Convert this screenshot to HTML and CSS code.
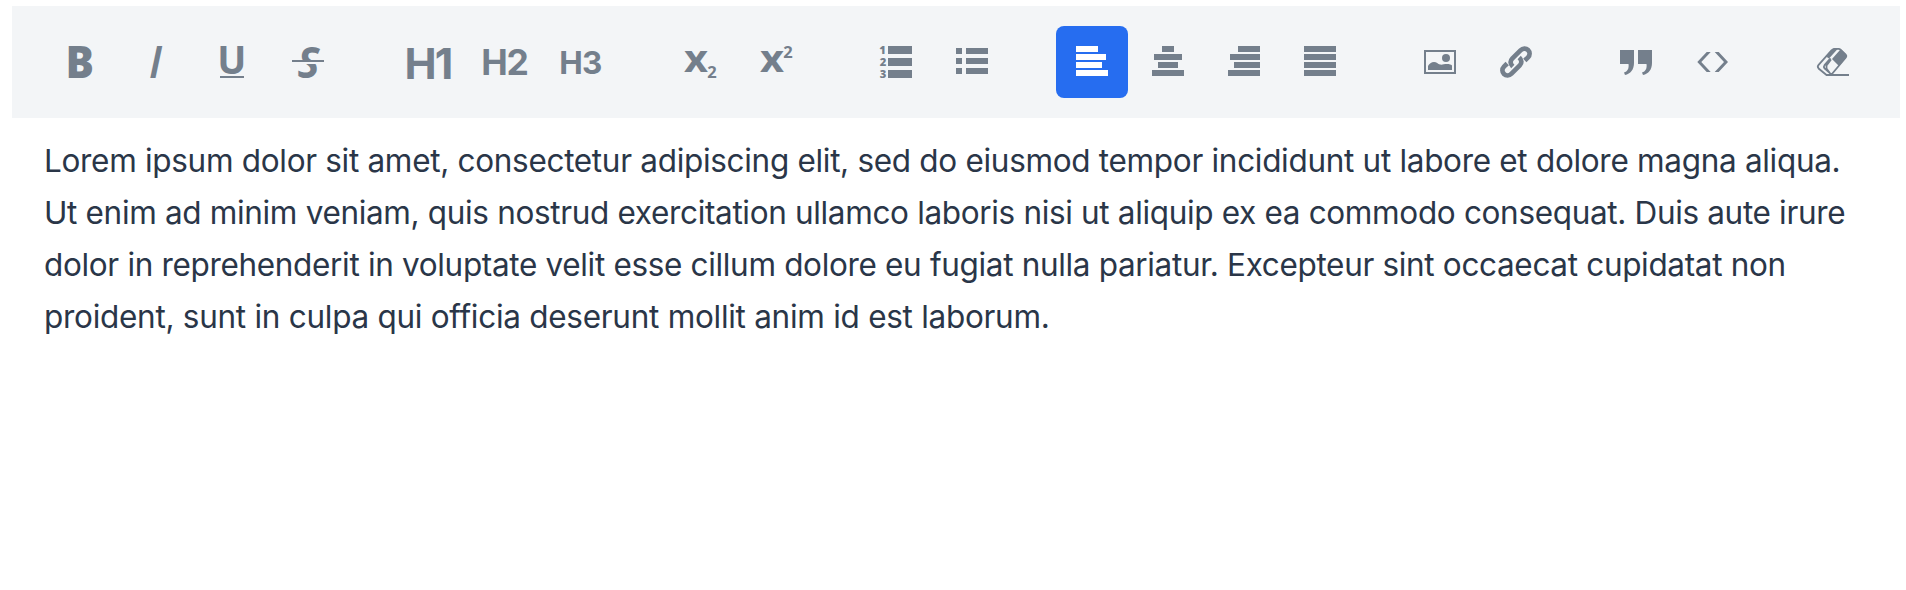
FILE: index.html
```html
<!DOCTYPE html>
<html lang="en">
<head>
<meta charset="utf-8">
<title>Editor</title>
<link rel="stylesheet" href="styles.css">
</head>
<body>
<div class="editor">
  <div class="toolbar">
    <div class="group">
      <button class="btn" aria-label="Bold"><svg viewBox="0 0 32 32"><text class="open heavy" x="1.600" y="32" font-size="44.8" textLength="28.500" lengthAdjust="spacingAndGlyphs">B</text></svg></button>
      <button class="btn" aria-label="Italic"><svg viewBox="0 0 32 32"><text class="open semi italic" x="8.8" y="32" font-size="44.8">I</text></svg></button>
      <button class="btn" aria-label="Underline"><svg viewBox="0 0 32 32"><text class="open bold" x="1.2" y="27.5" font-size="38.5">U</text><path d="M4 30h24v2H4z"/></svg></button>
      <button class="btn" aria-label="Strikethrough"><svg viewBox="0 0 32 32"><text class="open bold italic" x="5.500" y="31.5" font-size="43" textLength="22" lengthAdjust="spacingAndGlyphs">S</text><path class="cut" d="M0 16h32v2H0z"/><path d="M0 14h32v2H0z"/></svg></button>
    </div>
    <div class="group">
      <button class="btn h1">H1</button>
      <button class="btn h2">H2</button>
      <button class="btn h3">H3</button>
    </div>
    <div class="group">
      <button class="btn" aria-label="Subscript"><svg viewBox="0 0 32 32"><text class="open bold" x="0" y="26" font-size="37" textLength="24" lengthAdjust="spacingAndGlyphs">x</text><text class="open bold" x="23.3" y="32" font-size="16.5">2</text></svg></button>
      <button class="btn" aria-label="Superscript"><svg viewBox="0 0 32 32"><text class="open bold" x="0" y="26" font-size="37" textLength="24" lengthAdjust="spacingAndGlyphs">x</text><text class="open bold" x="23.3" y="12" font-size="16.5">2</text></svg></button>
    </div>
    <div class="group">
      <button class="btn" aria-label="Numbered list"><svg viewBox="0 0 32 32"><text class="open heavy" font-size="11.2"><tspan x="-.7" y="8">1</tspan><tspan x="-.3" y="20">2</tspan><tspan x="-.3" y="32">3</tspan></text><path d="M8 0h24v8H8zM8 12h24v8H8zM8 24h24v8H8z"/></svg></button>
      <button class="btn" aria-label="Bulleted list"><svg viewBox="0 0 32 32"><path d="M0 2h6v6H0zM10 2h22v6H10zM0 12h6v6H0zM10 12h22v6H10zM0 22h6v6H0zM10 22h22v6H10z"/></svg></button>
    </div>
    <div class="group">
      <button class="btn active" aria-label="Align left"><svg viewBox="0 0 32 32"><path d="M0 0h22v6H0zM0 8h30v6H0zM0 16h26v6H0zM0 24h32v6H0z"/></svg></button>
      <button class="btn" aria-label="Align center"><svg viewBox="0 0 32 32"><path d="M10 0h12v6H10zM2 8h28v6H2zM6 16h20v6H6zM0 24h32v6H0z"/></svg></button>
      <button class="btn" aria-label="Align right"><svg viewBox="0 0 32 32"><path d="M10 0h22v6H10zM2 8h30v6H2zM6 16h26v6H6zM0 24h32v6H0z"/></svg></button>
      <button class="btn" aria-label="Justify"><svg viewBox="0 0 32 32"><path d="M0 0h32v6H0zM0 8h32v6H0zM0 16h32v6H0zM0 24h32v6H0z"/></svg></button>
    </div>
    <div class="group">
      <button class="btn" aria-label="Image"><svg viewBox="0 0 32 32"><path fill-rule="evenodd" d="M0 4h32v24H0zM2 6v20h28V6z"/><circle cx="22" cy="12" r="4"/><path d="M4 24v-4c1-2 3.500-4 6-4s4 2 6 2.500 4-.5 7-.5c2.500 0 4 .5 5 1.500V24z"/></svg></button>
      <button class="btn" aria-label="Link"><svg viewBox="0 0 32 32"><g class="line" stroke-width="4.700"><path d="M12.800 20.500C10 17.800 10 14.800 12.200 12.600L20.500 4.300C22.800 2 26 2 28 4S30.200 9 28 11.300L24.800 14.500"/><path d="M19.200 11.500C22 14.200 22 17.200 19.800 19.400L11.500 27.700C9.200 30 6 30 4 28S1.800 23 4 20.700L7.200 17.500"/></g></svg></button>
    </div>
    <div class="group">
      <button class="btn" aria-label="Quote"><svg viewBox="0 0 32 32"><path d="M0 4h14v13c0 6.500-3.500 11-9 12l-1-2.500c3.500-1 5.200-4 4.500-8.500H0zM18 4h14v13c0 6.500-3.500 11-9 12l-1-2.500c3.500-1 5.200-4 4.500-8.500H18z"/></svg></button>
      <button class="btn" aria-label="Code"><svg viewBox="0 0 32 32"><path d="M10.700 6h4L5.300 16l9.400 10h-4L1.300 16zM18.700 6h4L32 16l-9.300 10h-4L28 16z"/></svg></button>
    </div>
    <div class="group">
      <button class="btn" aria-label="Clear formatting"><svg viewBox="0 0 32 32"><path d="M10 28h23v2H10z"/><g class="line" stroke-width="1.800"><path d="M10.500 29L2.600 22.500Q1 20.700 2.600 18.900L15.500 4.300Q17 2.800 19 2.800H22.500Q23.800 2.800 24.800 3.800L29.700 8.600Q31 10 29.800 11.500L15.500 28.500L8.500 22.300Q7.200 20.800 8.500 19.200L14.500 12.300M14.500 28L10.500 22.500V19.500L15 13.500"/></g><path d="M10 10.500L16.500 3q1-1 2.500-1h3.500l-9.500 10.500zM16 13L24 4q.8-.8 1.600 0l4.600 4.700q1.200 1.400 0 2.800L23 20z"/></svg></button>
    </div>
  </div>
  <div class="content">
    <p><span class="l1">Lorem ipsum dolor sit amet, consectetur adipiscing elit, sed do eiusmod tempor incididunt ut labore et dolore magna aliqua.</span> <span class="l2">Ut enim ad minim veniam, quis nostrud exercitation ullamco laboris nisi ut aliquip ex ea commodo consequat. Duis aute irure</span> <span class="l3">dolor in reprehenderit in voluptate velit esse cillum dolore eu fugiat nulla pariatur. Excepteur sint occaecat cupidatat non</span> <span class="l4">proident, sunt in culpa qui officia deserunt mollit anim id est laborum.</span></p>
  </div>
</div>
</body>
</html>
```
FILE: styles.css
```css
body {
  margin: 0;
  background: #fff;
  font-family: Inter, "Liberation Sans", sans-serif;
}
.editor {
  padding: 6px 6px 0 12px;
}
.toolbar {
  display: flex;
  gap: 48px;
  box-sizing: border-box;
  height: 112px;
  padding: 20px 32px;
  background: #f3f5f7;
  overflow: hidden;
}
.group {
  display: flex;
  gap: 4px;
}
.btn {
  display: flex;
  flex: none;
  align-items: center;
  justify-content: center;
  box-sizing: border-box;
  width: 72px;
  height: 72px;
  padding: 0;
  border: 0;
  border-radius: 8px;
  background: transparent;
  color: #747f8c;
  font-family: inherit;
  font-weight: 700;
  line-height: 1;
}
.btn.active {
  background: #266df0;
  color: #fff;
}
.btn svg {
  width: 32px;
  height: 32px;
  fill: currentColor;
  overflow: visible;
}
.line {
  fill: none;
  stroke: currentColor;
}
.cut {
  fill: #f3f5f7;
}
.open {
  font-family: "Open Sans", "Noto Sans", sans-serif;
}
.bold {
  font-weight: 700;
}
.semi {
  font-weight: 600;
}
.heavy {
  font-weight: 800;
}
.italic {
  font-style: italic;
}
.h1 {
  padding-top: 2px;
  font-size: 43px;
  letter-spacing: -1.8px;
}
.h2 {
  padding: 2px 0 0 1px;
  font-size: 35.5px;
  letter-spacing: -1.2px;
}
.h3 {
  padding: 2px 0 0 1px;
  font-size: 31.5px;
  font-weight: 650;
  letter-spacing: -0.8px;
}
.content {
  padding: 17px 32px;
}
.content p {
  margin: 0;
  color: #2a3648;
  font-size: 31.5px;
  line-height: 52px;
}
.content span {
  display: block;
  white-space: nowrap;
}
.l1 {
  letter-spacing: -0.31px;
}
.l2 {
  letter-spacing: -0.34px;
}
.l3 {
  letter-spacing: -0.335px;
}
.l4 {
  letter-spacing: -0.28px;
}
```
